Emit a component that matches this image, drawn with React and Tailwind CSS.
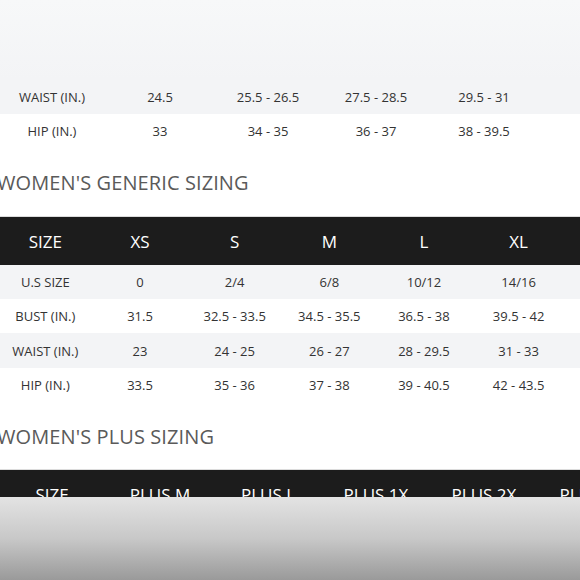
const topRows = [
  { label: 'WAIST (IN.)', values: ['24.5', '25.5 - 26.5', '27.5 - 28.5', '29.5 - 31'], shade: true },
  { label: 'HIP (IN.)', values: ['33', '34 - 35', '36 - 37', '38 - 39.5'], shade: false },
];

const genericHead = ['SIZE', 'XS', 'S', 'M', 'L', 'XL'];
const genericRows = [
  { label: 'U.S SIZE', values: ['0', '2/4', '6/8', '10/12', '14/16'], shade: true },
  { label: 'BUST (IN.)', values: ['31.5', '32.5 - 33.5', '34.5 - 35.5', '36.5 - 38', '39.5 - 42'], shade: false },
  { label: 'WAIST (IN.)', values: ['23', '24 - 25', '26 - 27', '28 - 29.5', '31 - 33'], shade: true, tall: true },
  { label: 'HIP (IN.)', values: ['33.5', '35 - 36', '37 - 38', '39 - 40.5', '42 - 43.5'], shade: false },
];

const plusHead = ['SIZE', 'PLUS M', 'PLUS L', 'PLUS 1X', 'PLUS 2X', 'PLUS 3X'];

const Heading = ({ children, className }) => (
  <div className={`flex items-center ${className}`}>
    <h2 className="ml-[-3px] text-[20px] font-normal text-[#5a5a5a] tracking-[0.1px] whitespace-nowrap">
      {children}
    </h2>
  </div>
);

const App = () => {
  return (
    <div
      className="w-[580px] h-[580px] overflow-hidden flex flex-col bg-white"
      style={{ fontFamily: '"Open Sans", "Liberation Sans", sans-serif' }}
    >
      <div className="h-[497px] flex-shrink-0 overflow-hidden flex flex-col">
        {/* Tail of the previous table */}
        <div className="h-[80px] flex-shrink-0 bg-gradient-to-b from-[#f7f8f9] to-[#f3f4f6]" />
        {topRows.map((row) => (
          <div
            key={row.label}
            className={`h-[34px] flex-shrink-0 ml-[-2px] pt-[2px] grid grid-cols-[repeat(5,108px)] items-center text-[13px] text-[#333] ${row.shade ? 'bg-[#f3f4f6]' : 'bg-white'}`}
          >
            <span className="text-center">{row.label}</span>
            {row.values.map((v, i) => (
              <span key={i} className="text-center whitespace-nowrap">{v}</span>
            ))}
          </div>
        ))}

        <Heading className="h-[68px] flex-shrink-0 pt-[2px]">WOMEN'S GENERIC SIZING</Heading>

        {/* Generic table */}
        <div className="flex-shrink-0 border-t border-[#dcdcdc]">
          <div className="h-[48px] bg-[#1c1c1c] ml-[-2px] pt-[2px] grid grid-cols-[repeat(6,94.67px)] items-center text-[17px] text-white">
            {genericHead.map((h) => (
              <span key={h} className="text-center">{h}</span>
            ))}
          </div>
          {genericRows.map((row) => (
            <div
              key={row.label}
              className={`${row.tall ? 'h-[35px]' : 'h-[34px]'} ml-[-2px] pt-[2px] grid grid-cols-[repeat(6,94.67px)] items-center text-[13px] text-[#333] ${row.shade ? 'bg-[#f3f4f6]' : 'bg-white'}`}
            >
              <span className="text-center whitespace-nowrap">{row.label}</span>
              {row.values.map((v, i) => (
                <span key={i} className="text-center whitespace-nowrap">{v}</span>
              ))}
            </div>
          ))}
        </div>

        <Heading className="h-[67px] flex-shrink-0 pt-[2px]">WOMEN'S PLUS SIZING</Heading>

        {/* Plus table (cut off) */}
        <div className="flex-shrink-0 border-t border-[#dcdcdc]">
          <div className="h-[48px] bg-[#1c1c1c] ml-[-2px] pt-[2px] grid grid-cols-[repeat(6,108px)] items-center text-[17px] text-white">
            {plusHead.map((h) => (
              <span key={h} className="text-center whitespace-nowrap">{h}</span>
            ))}
          </div>
        </div>
      </div>

      {/* Bottom shade */}
      <div className="flex-1 bg-gradient-to-b from-[#e3e3e3] via-[#c8c8c8] to-[#9a9a9a]" />
    </div>
  );
};

export default App;
